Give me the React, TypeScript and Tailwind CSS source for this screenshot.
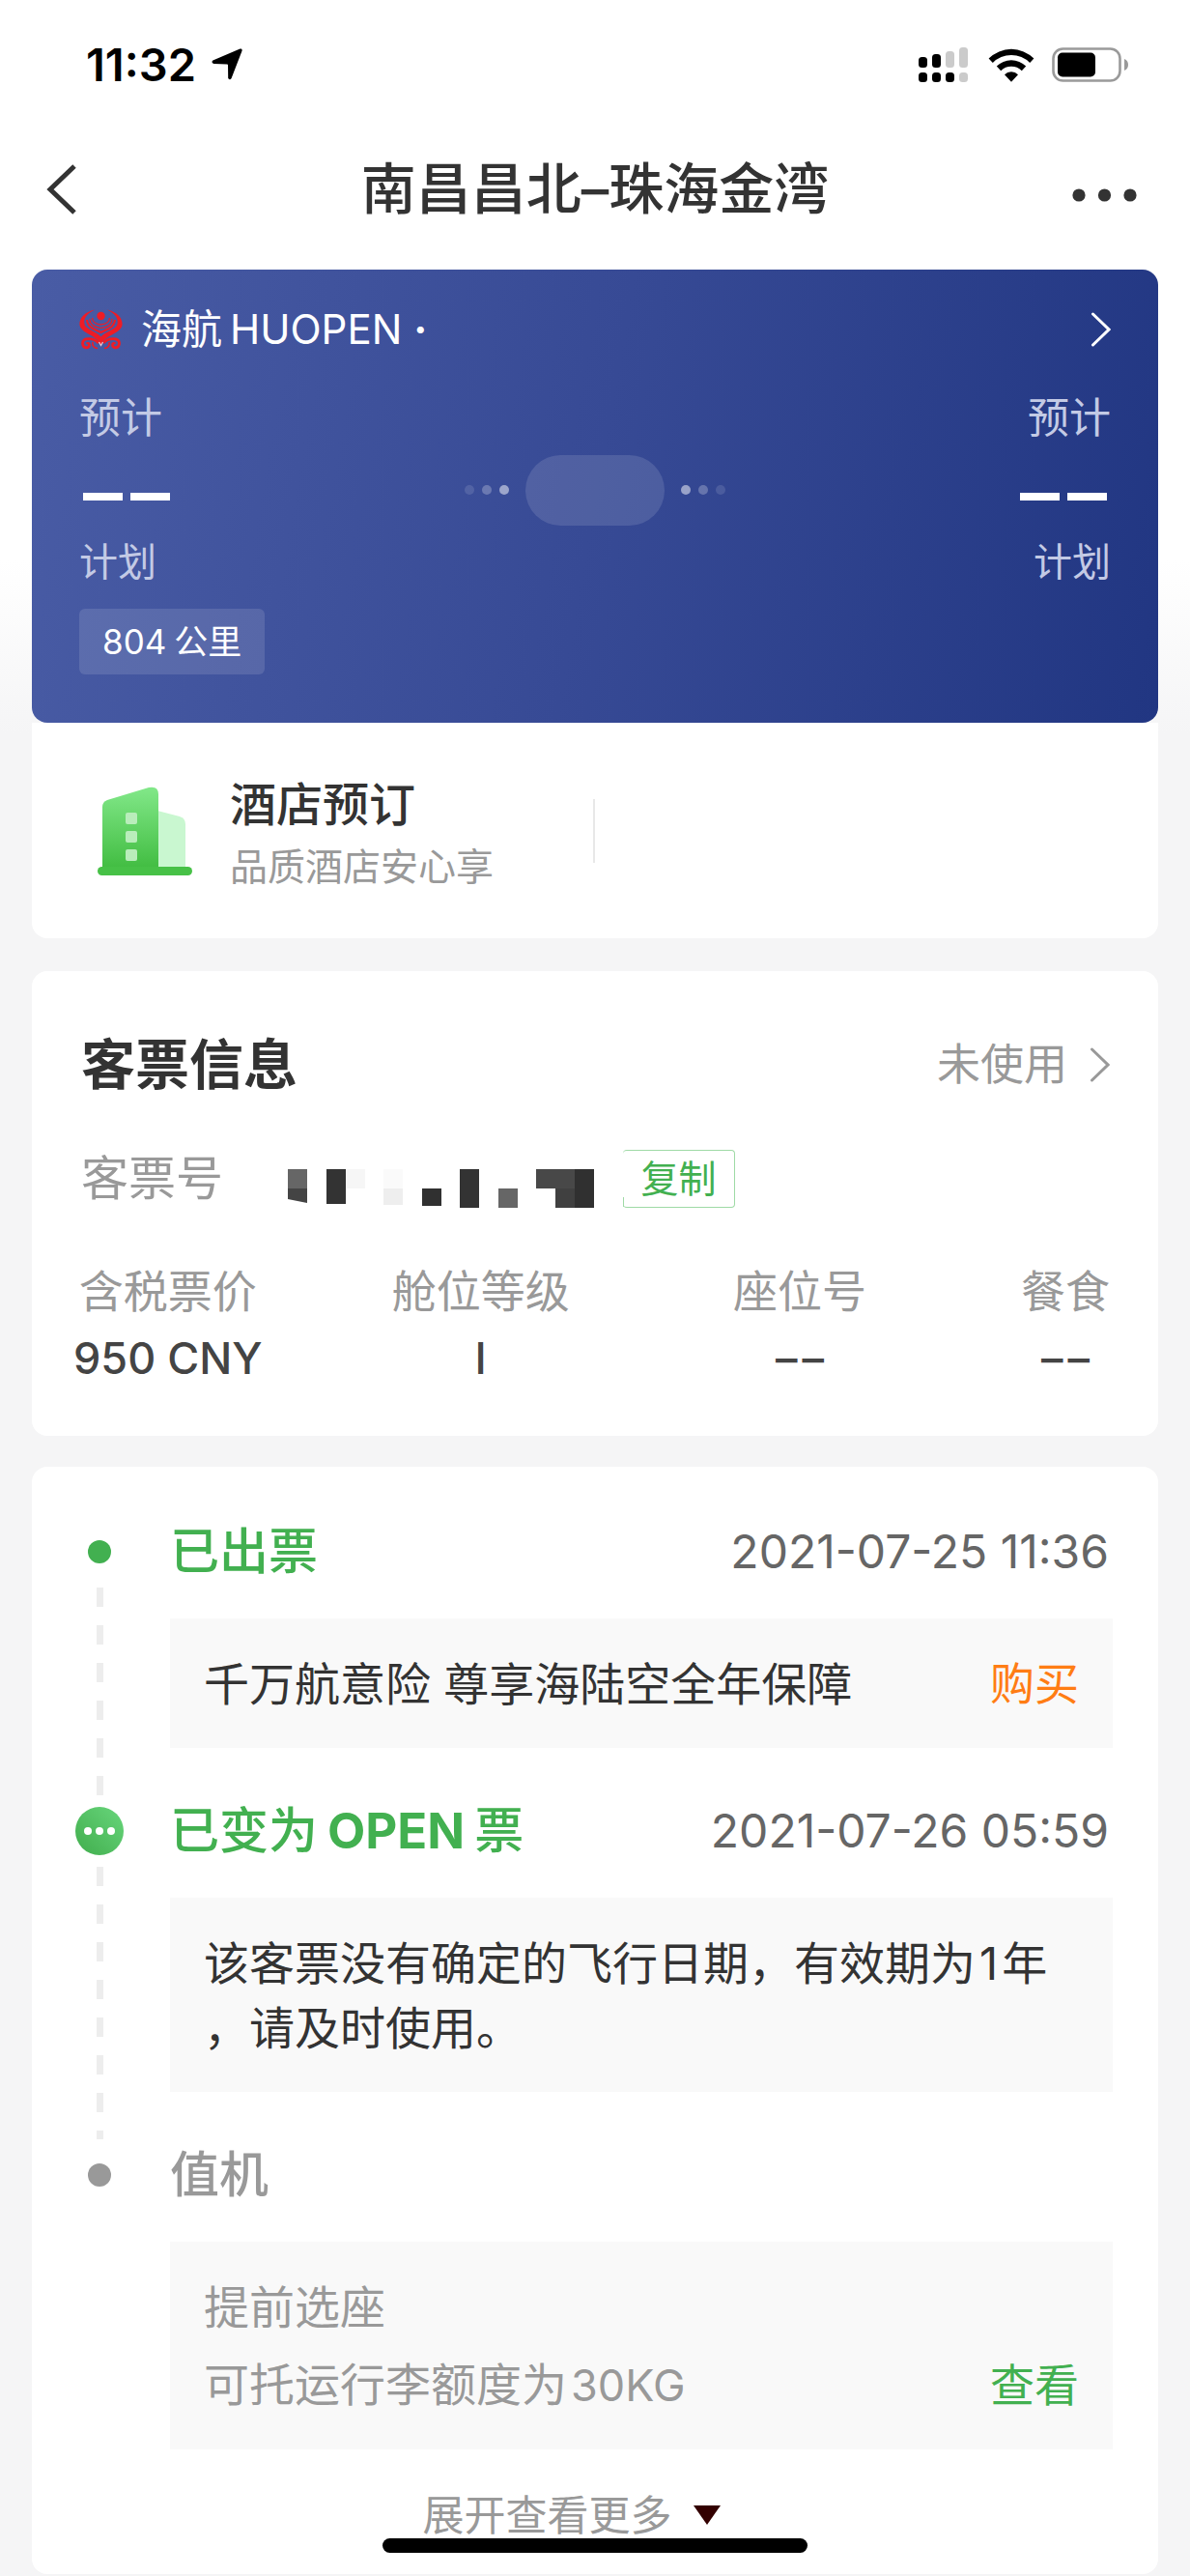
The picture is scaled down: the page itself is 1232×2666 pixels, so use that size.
import React, { useState } from 'react';

// Pixelated cover that hides the ticket number, [x, y, w, h, color]
const MASK_BLOCKS: [number, number, number, number, string][] = [
    [0, 0, 20, 20, '#666666'],
    [40, 0, 20, 36, '#333333'],
    [60, 0, 20, 20, '#f6f6f6'],
    [99, 0, 20, 20, '#fafafa'],
    [99, 20, 20, 17, '#eeeeee'],
    [139, 20, 20, 18, '#303030'],
    [178, 0, 20, 40, '#333333'],
    [218, 20, 20, 20, '#666666'],
    [257, 0, 40, 20, '#484848'],
    [277, 20, 20, 20, '#404040'],
    [297, 0, 20, 40, '#303030'],
];

const EMPTY_VALUE = (
    <span className="flex justify-center gap-[5px]">
        <span>–</span>
        <span>–</span>
    </span>
);

const TICKET_FIELDS = [
    { label: '含税票价', value: '950 CNY', className: '' },
    { label: '舱位等级', value: 'I', className: '' },
    { label: '座位号', value: EMPTY_VALUE, className: 'pr-[125px]' },
    { label: '餐食', value: EMPTY_VALUE, className: '' },
];

function StatusBar() {
    return (
        <div className="flex h-[134px] items-center justify-between pl-[89px] pr-[63px] text-black">
            <div className="flex items-center gap-4">
                <span className="text-[47px] leading-[60px] font-semibold">11:32</span>
                <svg width="32" height="36" viewBox="0 0 32 36">
                    <path d="M29.5 1.6 Q32 1 31.6 3.6 L20.6 32 Q19 34.4 17.2 32 L17 18.2 Q17 17.4 16 17.4 L2.4 17 Q-0.8 15.6 1.4 13.6 Z" />
                </svg>
            </div>
            <div className="flex items-center">
                <svg width="51" height="36" viewBox="0 0 51 36" className="mr-[21px]">
                    <rect x="0" y="10" width="9" height="11" rx="3.5" />
                    <rect x="14" y="7" width="9" height="14" rx="3.5" />
                    <rect x="28" y="4" width="9" height="17" rx="3.5" fill="#cbcbcb" />
                    <rect x="42" y="0" width="9" height="21" rx="3.5" fill="#cbcbcb" />
                    <rect x="0" y="26" width="9" height="10" rx="3.5" />
                    <rect x="14" y="26" width="9" height="10" rx="3.5" />
                    <rect x="28" y="26" width="9" height="10" rx="3.5" />
                    <rect x="42" y="26" width="9" height="10" rx="3.5" fill="#cbcbcb" />
                </svg>
                <svg width="48" height="35" viewBox="0 0 48 35" className="mr-[18px]">
                    <path d="M0.6 10.6 A33 33 0 0 1 47.4 10.6 L43.2 15 A27 27 0 0 0 4.8 15 Z" />
                    <path d="M8.8 18.6 A21.5 21.5 0 0 1 39.2 18.6 L34.8 23.2 A15.4 15.4 0 0 0 13.2 23.2 Z" />
                    <path d="M17 27.2 A10 10 0 0 1 31 27.2 L24 34.8 Z" />
                </svg>
                <svg width="80" height="36" viewBox="0 0 80 36">
                    <rect x="1.5" y="1.5" width="69" height="33" rx="10" fill="none" stroke="#9a9a9a" strokeWidth="2.6" />
                    <rect x="6" y="5.5" width="39" height="25" rx="5" />
                    <path d="M75 12 Q79 13.5 79 18 Q79 22.5 75 24 Z" fill="#9a9a9a" />
                </svg>
            </div>
        </div>
    );
}

function Chevron({ className }: { className: string }) {
    return (
        <svg width="22" height="36" viewBox="0 0 22 36" fill="none" stroke="currentColor" strokeWidth="3" strokeLinecap="round" strokeLinejoin="miter" className={className}>
            <path d="M3.5 2 L20 18 L3.5 34" />
        </svg>
    );
}

function AirlineLogo() {
    return (
        <svg width="46" height="42" viewBox="0 0 46 42" fill="none" stroke="#ee1c25">
            <circle cx="22.5" cy="7" r="4.2" fill="#ee1c25" stroke="none" />
            {/* wings */}
            <path d="M16 0.6 C6 3 0 9 0.4 16 C1.5 25 17 26 22.5 36.5 C28 26 43.5 25 44.6 16 C45 9 39 3 29 0.6 C36 4 42 10 39 17 C35 22.5 27 23 22.5 28.5 C18 23 10 22.5 6 17 C3 10 9 4 16 0.6 Z" fill="#ee1c25" stroke="none" />
            <path d="M8 11 C8 19 17 21 22.5 24 C28 21 37 19 37 11" strokeWidth="2" />
            <path d="M11 10 C11 17 17 18.5 22.5 19.5 C28 18.5 34 17 34 10" strokeWidth="1.2" />
            <path d="M13.5 9 C14 14 17 15.5 22.5 15.8 C28 15.5 31 14 31.5 9" strokeWidth="1.2" />
            {/* curls */}
            <path d="M20 35 C15 29.5 4 29 3.5 35 C3.5 41 10.5 41 10.5 37 C10.5 35 8.5 35 8 36" strokeWidth="2.8" />
            <path d="M25 35 C30 29.5 41 29 41.5 35 C41.5 41 34.5 41 34.5 37 C34.5 35 36.5 35 37 36" strokeWidth="2.8" />
            <path d="M14 34 C13 38 16 40.5 19 40.5 M31 34 C32 38 29 40.5 26 40.5" strokeWidth="1.6" />
            <path d="M20.5 34 L22.5 37.5 L24.5 34" stroke="#f6c3cc" strokeWidth="1.2" />
        </svg>
    );
}

function HotelIcon() {
    return (
        <svg width="98" height="92" viewBox="0 0 98 92">
            <defs>
                <linearGradient id="tower" x1="0" y1="0" x2="0" y2="1">
                    <stop offset="0" stopColor="#82e889" />
                    <stop offset="1" stopColor="#42bd42" />
                </linearGradient>
            </defs>
            <path d="M62 25 L85 31 Q91 33 91 39 V86 H62 Z" fill="#c9f7d0" />
            <path d="M5 84 V21 Q5 16 10 14 L53 1 Q63 -1 63 8 V84 Z" fill="url(#tower)" />
            <rect x="0" y="83" width="98" height="9" rx="4.5" fill="#47c147" />
            <rect x="29" y="27" width="12" height="12" rx="2" fill="#b9edbb" />
            <rect x="29" y="46" width="12" height="12" rx="2" fill="#b9edbb" />
            <rect x="29" y="65" width="12" height="12" rx="2" fill="#b9edbb" />
        </svg>
    );
}

function FlightTime({ align }: { align: string }) {
    return (
        <div className={`flex flex-col text-[#c3cae5] ${align}`}>
            <span className="text-[43px] leading-[60px]">预计</span>
            <span className="mt-[19px] flex h-[66px] items-center gap-2 px-1" aria-label="--">
                <span className="h-2 w-[41px] bg-white" />
                <span className="h-2 w-[41px] bg-white" />
            </span>
            <span className="mt-[5px] text-[40px] leading-[60px]">计划</span>
        </div>
    );
}

function FlightCard() {
    return (
        <section className="rounded-2xl bg-linear-[100deg] from-[#495ca5] via-[#374a95] to-[#213682] px-[49px] pt-8 pb-[50px] text-white">
            <a href="#flight" className="flex h-[60px] items-center">
                <AirlineLogo />
                <span className="ml-[18px] text-[42px] leading-[60px]">
                    海航<span className="ml-2">HUOPEN</span> <span className="font-bold">·</span>
                </span>
                <Chevron className="ml-auto" />
            </a>
            <div className="mt-[31px] flex items-center justify-between">
                <FlightTime align="items-start" />
                <div className="flex items-center gap-[17px]">
                    <div className="flex gap-2">
                        <i className="size-[10px] rounded-full bg-white/12" />
                        <i className="size-[10px] rounded-full bg-white/25" />
                        <i className="size-[10px] rounded-full bg-white/50" />
                    </div>
                    <div className="h-[73px] w-[144px] rounded-full bg-white/12" />
                    <div className="flex gap-2">
                        <i className="size-[10px] rounded-full bg-white/50" />
                        <i className="size-[10px] rounded-full bg-white/25" />
                        <i className="size-[10px] rounded-full bg-white/12" />
                    </div>
                </div>
                <FlightTime align="items-end" />
            </div>
            <div className="mt-[18px] inline-flex h-[68px] items-center rounded-md bg-white/12 px-6 text-[35px] leading-[68px]">
                804<span className="ml-2">公里</span>
            </div>
        </section>
    );
}

function TicketCard() {
    return (
        <section className="mt-[34px] rounded-2xl bg-white pl-[43px] pr-[50px] pt-[62px] pb-[45px]">
            <div className="flex h-[70px] items-center justify-between pl-2">
                <h2 className="text-[56px] leading-[70px] font-bold">客票信息</h2>
                <a href="#status" className="flex items-center text-[45px] leading-[70px] text-[#999]">
                    未使用
                    <Chevron className="ml-[22px]" />
                </a>
            </div>
            <div className="mt-[48px] flex h-[70px] items-center pl-2">
                <span className="text-[49px] leading-[70px] text-[#999]">客票号</span>
                <svg width="317" height="40" viewBox="0 0 317 40" className="ml-[67px] mt-5">
                    {MASK_BLOCKS.map(([x, y, w, h, color]) => (
                        <rect key={`${x}-${y}`} x={x} y={y} width={w} height={h} fill={color} />
                    ))}
                    <path d="M0 20 H20 V35 L0 31 Z" fill="#444" />
                </svg>
                <button className="relative ml-[30px] h-[60px] w-[116px] rounded-sm border border-l-0 border-[#9fdaa6] text-[39px] leading-[58px] text-[#42b050]">
                    复制
                    <span className="absolute bottom-0 left-0 h-[10px] w-px bg-[#9fdaa6]" />
                </button>
            </div>
            <dl className="mt-[46px] grid grid-cols-[auto_452fr_333fr_auto]">
                {TICKET_FIELDS.map(f => (
                    <div key={f.label} className={`text-center ${f.className}`}>
                        <dt className="text-[46px] leading-[70px] text-[#999]">{f.label}</dt>
                        <dd className="text-[45px] leading-[70px] font-medium text-[#444]">{f.value}</dd>
                    </div>
                ))}
            </dl>
        </section>
    );
}

interface StepProps {
    marker: React.ReactNode;
    title: React.ReactNode;
    titleColor?: string;
    time?: string;
    last?: boolean;
    children: React.ReactNode;
}

function Step({ marker, title, titleColor = 'text-[#42b050]', time, last, children }: StepProps) {
    return (
        <li className="flex gap-[47px]">
            <div className="flex w-[52px] flex-col items-center">
                <div className="flex h-[74px] shrink-0 items-center">{marker}</div>
                {!last && (
                    <div className="w-[7px] grow bg-[repeating-linear-gradient(to_bottom,#ededed_0_20px,transparent_20px_39px)]" />
                )}
            </div>
            <div className={last ? 'grow' : 'grow pb-[49px]'}>
                <div className="flex h-[74px] items-center justify-between pr-1">
                    <h3 className={`text-[51px] leading-[74px] font-medium ${titleColor}`}>{title}</h3>
                    {time && <time className="text-[48px] leading-[74px] text-[#666]">{time}</time>}
                </div>
                <div className="mt-8 flex items-end justify-between bg-[#f9f9f9] px-[35px] pt-[34px] pb-[33px] text-[47px] leading-[67px]">
                    {children}
                </div>
            </div>
        </li>
    );
}

export default function App() {
    const [expanded, setExpanded] = useState(false);

    return (
        <div className="relative min-h-screen overflow-hidden bg-[#f5f5f6] bg-[linear-gradient(to_bottom,#fff_580px,#f5f5f6_760px)] font-['Inter','Noto_Sans_CJK_SC',sans-serif] text-[#333]">
            <StatusBar />

            <header className="flex h-[124px] items-center justify-between px-12">
                <button aria-label="返回">
                    <svg width="74" height="52" viewBox="0 0 74 52" fill="none" stroke="#333" strokeWidth="5">
                        <path d="M29 2 L4 26 L29 50" />
                    </svg>
                </button>
                <h1 className="text-[57px] leading-[80px] font-medium">南昌昌北–珠海金湾</h1>
                <button aria-label="更多">
                    <svg width="74" height="14" viewBox="0 0 74 14" fill="#333" className="mt-3">
                        <circle cx="7" cy="7" r="6.6" />
                        <circle cx="33.5" cy="7" r="6.6" />
                        <circle cx="60" cy="7" r="6.6" />
                    </svg>
                </button>
            </header>

            <main className="px-[33px] pt-[21px]">
                <FlightCard />
                <div className="flex h-[223px] items-center rounded-b-2xl bg-white">
                    <a href="#hotel" className="flex w-1/2 items-center pl-[68px]">
                        <HotelIcon />
                        <span className="ml-[39px] flex flex-col pt-2">
                            <span className="text-[48px] leading-[66px] font-medium">酒店预订</span>
                            <span className="text-[39px] leading-[62px] text-[#999]">品质酒店安心享</span>
                        </span>
                        <span className="ml-auto h-[66px] w-[2px] bg-[#e8e8e8]" />
                    </a>
                </div>

                <TicketCard />

                <section className="mt-8 rounded-2xl bg-white pl-[44px] pr-[47px] pt-[51px] pb-[26px]">
                    <ol className="flex flex-col">
                        <Step
                            marker={<span className="size-6 rounded-full bg-[#42b050]" />}
                            title="已出票"
                            time="2021-07-25 11:36"
                        >
                            <span>千万航意险 尊享海陆空全年保障</span>
                            <button className="text-[46px] text-[#ff7d14]">购买</button>
                        </Step>
                        <Step
                            marker={
                                <span className="flex size-[50px] items-center justify-center gap-1 rounded-full bg-linear-to-tr from-[#40ad4c] to-[#68d67c]">
                                    <i className="size-2 rounded-full bg-white" />
                                    <i className="size-2 rounded-full bg-white" />
                                    <i className="size-2 rounded-full bg-white" />
                                </span>
                            }
                            title={<>已变为<span className="mx-[10px] font-bold">OPEN</span>票</>}
                            time="2021-07-26 05:59"
                        >
                            <p>
                                该客票没有确定的飞行日期，有效期为<span className="mx-1">1</span>年
                                <br />
                                ，请及时使用。
                            </p>
                        </Step>
                        <Step
                            last
                            marker={<span className="size-6 rounded-full bg-[#999]" />}
                            title="值机"
                            titleColor="text-[#999]"
                        >
                            <div className="flex flex-col gap-[13px] text-[#999]">
                                <span>提前选座</span>
                                <span>可托运行李额度为<span className="ml-1 text-[45px]">30KG</span></span>
                            </div>
                            <button className="text-[46px] text-[#42b050]">查看</button>
                        </Step>
                    </ol>
                    <button
                        onClick={() => setExpanded(!expanded)}
                        aria-expanded={expanded}
                        className="mt-[33px] flex w-full items-center justify-center gap-[22px] pr-[46px] text-[43px] leading-[70px] text-[#999]"
                    >
                        展开查看更多
                        <svg width="28" height="20" viewBox="0 0 28 20">
                            <path d="M0 0 H28 L14 20 Z" fill="#330000" />
                        </svg>
                    </button>
                </section>
            </main>

            {/* Home indicator */}
            <div className="absolute bottom-6 left-1/2 h-[15px] w-[440px] -translate-x-1/2 rounded-full bg-black" />
        </div>
    );
}
